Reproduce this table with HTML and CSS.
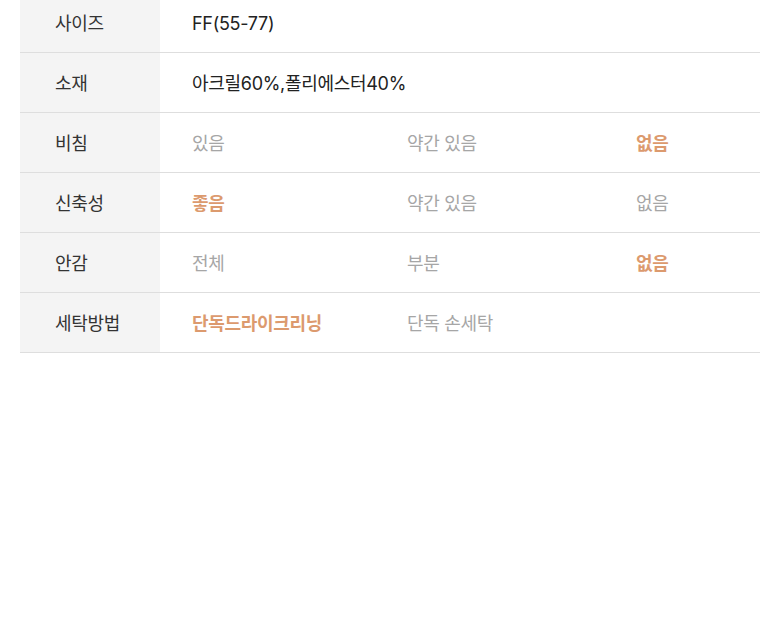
FILE: index.html
```html
<!DOCTYPE html>
<html lang="ko">
  <head>
    <meta charset="UTF-8" />
    <meta name="viewport" content="width=device-width, initial-scale=1.0" />
    <title>상품 정보</title>
    <link rel="stylesheet" href="styles.css">
  </head>
  <body>
    <div class="info-table">
      <div class="info-row">
        <div class="info-label">사이즈</div>
        <div class="info-value">FF(55-77)</div>
      </div>
      <div class="info-row">
        <div class="info-label">소재</div>
        <div class="info-value">아크릴60%,폴리에스터40%</div>
      </div>
      <div class="info-row">
        <div class="info-label">비침</div>
        <div class="info-options">
          <span class="opt">있음</span>
          <span class="opt">약간 있음</span>
          <span class="opt on">없음</span>
        </div>
      </div>
      <div class="info-row">
        <div class="info-label">신축성</div>
        <div class="info-options">
          <span class="opt on">좋음</span>
          <span class="opt">약간 있음</span>
          <span class="opt">없음</span>
        </div>
      </div>
      <div class="info-row">
        <div class="info-label">안감</div>
        <div class="info-options">
          <span class="opt">전체</span>
          <span class="opt">부분</span>
          <span class="opt on">없음</span>
        </div>
      </div>
      <div class="info-row">
        <div class="info-label">세탁방법</div>
        <div class="info-options">
          <span class="opt on">단독드라이크리닝</span>
          <span class="opt">단독 손세탁</span>
        </div>
      </div>
    </div>
  </body>
</html>
```

FILE: styles.css
```css
body {
  margin: 0;
  padding: 0 20px;
  background: #fff;
  font-family: Inter, "Noto Sans CJK KR", sans-serif;
  font-size: 18px;
  line-height: 22px;
  color: #222;
}
.info-table {
  margin-top: -7px;
}
.info-row {
  display: flex;
  height: 59px;
  border-bottom: 1px solid #dedede;
}
.info-label {
  width: 105px;
  flex: none;
  padding-left: 35px;
  padding-top: 2px;
  background: #f4f4f4;
  color: #333;
  display: flex;
  align-items: center;
  letter-spacing: -0.3px;
}
.info-value,
.info-options {
  flex: 1;
  padding-left: 32px;
  padding-top: 2px;
  display: flex;
  align-items: center;
  letter-spacing: -0.3px;
}
.info-options {
  display: grid;
  grid-template-columns: 215px 229px 1fr;
  align-items: center;
}
.opt {
  color: #a6a6a6;
}
.opt.on {
  color: #dc9a6e;
  font-weight: 600;
}
```
